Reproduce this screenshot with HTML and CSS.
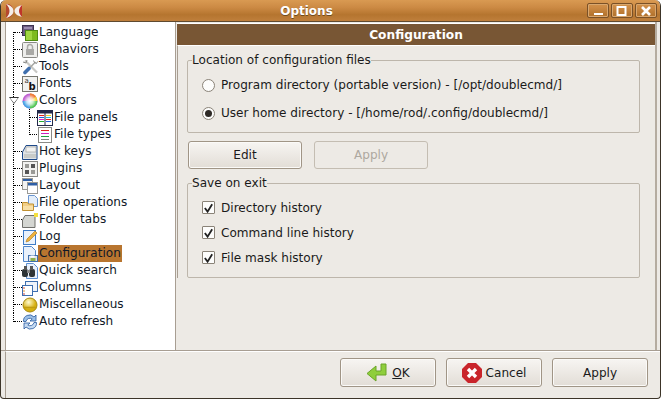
FILE: index.html
```html
<!DOCTYPE html>
<html lang="en">
<head>
<meta charset="utf-8">
<title>Options</title>
<link rel="stylesheet" href="styles.css">
</head>
<body>
<svg class="defs" width="0" height="0" aria-hidden="true">
  <symbol id="i-lang" viewBox="0 0 16 16"><rect x="0.5" y="0.5" width="11" height="10" fill="#6b5a80" stroke="#3d3350"/><rect x="2" y="2" width="8" height="2" fill="#9c8db0"/><rect x="3.5" y="5.5" width="12" height="10" fill="#7dbb1e" stroke="#4f8a10"/><rect x="4" y="6" width="6" height="9" fill="#a0d640"/></symbol>
  <symbol id="i-beh" viewBox="0 0 16 16"><rect x="0.5" y="0.5" width="15" height="15" rx="1" fill="#eeeeec" stroke="#8a8a86"/><rect x="4" y="7" width="8" height="6" fill="#a9a9a6"/><path d="M5.5 7V5a2.5 2.5 0 0 1 5 0v2" fill="none" stroke="#a9a9a6" stroke-width="1.5"/></symbol>
  <symbol id="i-tools" viewBox="0 0 16 16"><path d="M3 1.500l12 12" stroke="#b8b8b4" stroke-width="2"/><path d="M3 1.500l12 12" stroke="#e6e6e4" stroke-width="0.700"/><path d="M13.500 3L8 8.500" stroke="#a8a8a4" stroke-width="1.600"/><path d="M11.500 1.500l1 2 2 1 1-2" fill="none" stroke="#8a8a86"/><path d="M1 3l3 1 1-3" fill="none" stroke="#8a8a86"/><path d="M7 9.500l-4 4" stroke="#3f6fae" stroke-width="3.600" stroke-linecap="round"/></symbol>
  <symbol id="i-colors" viewBox="0 0 16 16"><defs><radialGradient id="wh"><stop offset="0" stop-color="#fff"/><stop offset="0.5" stop-color="#fff" stop-opacity="0.7"/><stop offset="1" stop-color="#fff" stop-opacity="0"/></radialGradient></defs><circle cx="8" cy="8" r="7.5" fill="#c060d0"/><path d="M8 8V0.5A7.5 7.5 0 0 1 15.5 8z" fill="#f4d23a"/><path d="M8 8h7.5A7.5 7.5 0 0 1 8 15.5z" fill="#54c957"/><path d="M8 8v7.5A7.5 7.500 0 0 1 .5 8z" fill="#4aa5e6"/><path d="M8 8L8 .5A7.500 7.500 0 0 1 14 3.500z" fill="#f07a3a"/><circle cx="8" cy="8" r="6.500" fill="url(#wh)"/></symbol>
  <symbol id="i-panels" viewBox="0 0 16 16"><rect x="0.5" y="0.5" width="15" height="15" fill="#fff" stroke="#232a4a"/><rect x="1" y="1" width="14" height="2.500" fill="#232a4a"/><path d="M8 3v12" stroke="#232a4a"/><path d="M2 5.500h5" stroke="#e02020"/><path d="M2 7.500h5" stroke="#2060e0"/><path d="M2 9.500h5" stroke="#e020c0"/><path d="M2 11.500h5" stroke="#20b030"/><path d="M9 5.500h5" stroke="#e8d020"/><path d="M9 7.500h5" stroke="#20c0e0"/><path d="M9 9.500h5" stroke="#e02020"/><path d="M9 11.500h5" stroke="#2060e0"/></symbol>
  <symbol id="i-types" viewBox="0 0 16 16"><rect x="1.5" y="0.5" width="13" height="15" fill="#fff" stroke="#8a8a86"/><path d="M4 3.500h8" stroke="#e02020"/><path d="M4 6.500h8" stroke="#d020c0"/><path d="M4 9.500h8" stroke="#20a040"/><path d="M4 12.500h8" stroke="#808080"/></symbol>
  <symbol id="i-keys" viewBox="0 0 16 16"><path d="M0.500 15.500V8L4 1.500h11v14z" fill="#dfe3e6" stroke="#1f4a8a"/><rect x="4" y="3" width="10" height="5" fill="#f3f3f1" stroke="#9a9a96" stroke-width="0.600"/><rect x="2" y="10" width="12" height="4" fill="#c9cbc8"/></symbol>
  <symbol id="i-plug" viewBox="0 0 16 16"><rect x="0.500" y="0.500" width="15" height="15" fill="#f2f2f0" stroke="#8a8a86"/><rect x="3" y="3" width="4" height="4" fill="#9a9a96"/><rect x="9" y="3" width="4" height="4" fill="#555"/><rect x="3" y="9" width="4" height="4" fill="#555"/><rect x="9" y="9" width="4" height="4" fill="#9a9a96"/></symbol>
  <symbol id="i-layout" viewBox="0 0 16 16"><rect x="0.500" y="0.500" width="10" height="11" fill="#f4f4f2" stroke="#9a9a96"/><rect x="1" y="1" width="9" height="2" fill="#2f5fa5"/><rect x="5.500" y="4.500" width="10" height="11" fill="#fff" stroke="#9a9a96"/><rect x="6" y="5" width="9" height="2.500" fill="#2f5fa5"/></symbol>
  <symbol id="i-fileop" viewBox="0 0 16 16"><path d="M6.500 0.500h6l3 3v8h-9z" fill="#e4eefa" stroke="#6a95cf"/><path d="M0.500 7.500h5l1 1.500h5v6.500h-11z" fill="#f3d088" stroke="#c09030"/><rect x="1" y="11" width="10" height="4" fill="#f8e0a8"/></symbol>
  <symbol id="i-tabs" viewBox="0 0 16 16"><path d="M0.500 15.500V8L3 3.500h10v12z" fill="#d4d6d2" stroke="#70706c"/><rect x="12" y="1" width="4" height="4" fill="#f4e040"/></symbol>
  <symbol id="i-log" viewBox="0 0 16 16"><rect x="1.500" y="1.500" width="12" height="14" fill="#eaf2fc" stroke="#3e7cc8"/><path d="M4 13l1-3 8-8 2 2-8 8z" fill="#eeb13c" stroke="#a87820" stroke-width="0.600"/></symbol>
  <symbol id="i-conf" viewBox="0 0 16 16"><path d="M1.500 0.500h8l4 4v11h-12z" fill="#e8f0fb" stroke="#4f86cc"/><rect x="6.500" y="9.500" width="9" height="6" fill="#dfe3ea" stroke="#3f6fae"/><rect x="8.500" y="12" width="5" height="3" fill="#8db04e"/><rect x="8.500" y="9.500" width="4" height="2" fill="#fff"/></symbol>
  <symbol id="i-search" viewBox="0 0 16 16"><path d="M4.500 0.500h7l4 4v11h-11z" fill="#e8f0fb" stroke="#5d8fd0"/><rect x="0" y="6" width="6" height="8" rx="2" fill="#2e3436"/><rect x="7" y="6" width="6" height="8" rx="2" fill="#2e3436"/><rect x="2" y="3" width="3" height="4" fill="#555"/><rect x="8" y="3" width="3" height="4" fill="#555"/><rect x="5" y="7" width="3" height="3" fill="#888"/></symbol>
  <symbol id="i-cols" viewBox="0 0 16 16"><rect x="3.500" y="1.500" width="12" height="10" fill="#eef3fa" stroke="#3e6fb0"/><rect x="0.500" y="5.500" width="10" height="10" fill="#fff" stroke="#3e6fb0"/><path d="M1 8h2" stroke="#d05030"/><path d="M1 11h2" stroke="#e09030"/><path d="M1 14h2" stroke="#c04040"/></symbol>
  <symbol id="i-misc" viewBox="0 0 16 16"><defs><radialGradient id="yl" cx="0.400" cy="0.300"><stop offset="0" stop-color="#fffbd0"/><stop offset="1" stop-color="#d6b010"/></radialGradient></defs><circle cx="8" cy="8" r="7" fill="url(#yl)" stroke="#a88a10"/><path d="M1.500 10.500h13" stroke="#c09c10" stroke-width="1.500"/></symbol>
  <symbol id="i-refresh" viewBox="0 0 16 16"><path d="M1.500 7.500A6 6 0 0 1 12 3l2-2v6H8l2.200-2A4 4 0 0 0 4 7.500z" fill="#9dc0e8" stroke="#27599e" stroke-width="0.800"/><path d="M14.500 8.500A6 6 0 0 1 4 13l-2 2V9h6l-2.200 2A4 4 0 0 0 12 8.500z" fill="#c5daf2" stroke="#27599e" stroke-width="0.800"/></symbol>
</svg>

<div class="window">
  <header class="titlebar">
    <svg class="app-logo" viewBox="0 0 16 14" width="16" height="14" aria-hidden="true">
      <path d="M0 0h3c3 2 4.500 4.500 4.500 7S6 12 3 14H0z" fill="#b5482f"/>
      <path d="M16 1c-3 1-7 3-7 6s4 5 7 6z" fill="#c0352a"/>
      <path d="M0 0c5 1.500 7.500 4 7.500 7S5 12.500 0 14c2.500-2.500 3.500-4.500 3.500-7S2.500 2.500 0 0z" fill="#f4efe9"/>
      <path d="M16 1c-4 1-7.500 3-7.500 6s3.500 5 7.500 6c-2-2-3-4-3-6s1-4 3-6z" fill="#f4efe9"/>
    </svg>
    <span class="title">Options</span>
    <div class="win-buttons">
      <span class="win-btn"><svg viewBox="0 0 20 14" width="20" height="14"><rect x="6" y="9" width="9" height="2" fill="#fff"/></svg></span>
      <span class="win-btn"><svg viewBox="0 0 20 14" width="20" height="14"><rect x="5.500" y="3" width="8" height="8" fill="none" stroke="#fff" stroke-width="2"/></svg></span>
      <span class="win-btn"><svg viewBox="0 0 20 14" width="20" height="14"><path d="M6 3l8 8M14 3l-8 8" stroke="#fff" stroke-width="2.600"/></svg></span>
    </div>
  </header>

  <div class="main">
    <nav class="tree">
      <div class="row first"><span class="conn"></span><svg class="ic"><use href="#i-lang"/></svg><span class="lbl">Language</span></div>
      <div class="row"><span class="conn"></span><svg class="ic"><use href="#i-beh"/></svg><span class="lbl">Behaviors</span></div>
      <div class="row"><span class="conn"></span><svg class="ic"><use href="#i-tools"/></svg><span class="lbl">Tools</span></div>
      <div class="row"><span class="conn"></span><svg class="ic" viewBox="0 0 16 16"><rect x="0.5" y="0.5" width="15" height="15" fill="#f2f2f0" stroke="#77776f"/><text x="2.500" y="7" class="ic-a">a</text><text x="6.500" y="14" class="ic-b">b</text></svg><span class="lbl">Fonts</span></div>
      <div class="row"><span class="conn conn-open"><span class="arrow"></span></span><svg class="ic"><use href="#i-colors"/></svg><span class="lbl">Colors</span></div>
      <div class="row"><span class="trunk"></span><span class="conn conn-sub"></span><svg class="ic"><use href="#i-panels"/></svg><span class="lbl">File panels</span></div>
      <div class="row"><span class="trunk"></span><span class="conn conn-sub conn-end"></span><svg class="ic"><use href="#i-types"/></svg><span class="lbl">File types</span></div>
      <div class="row"><span class="conn"></span><svg class="ic"><use href="#i-keys"/></svg><span class="lbl">Hot keys</span></div>
      <div class="row"><span class="conn"></span><svg class="ic"><use href="#i-plug"/></svg><span class="lbl">Plugins</span></div>
      <div class="row"><span class="conn"></span><svg class="ic"><use href="#i-layout"/></svg><span class="lbl">Layout</span></div>
      <div class="row"><span class="conn"></span><svg class="ic"><use href="#i-fileop"/></svg><span class="lbl">File operations</span></div>
      <div class="row"><span class="conn"></span><svg class="ic"><use href="#i-tabs"/></svg><span class="lbl">Folder tabs</span></div>
      <div class="row"><span class="conn"></span><svg class="ic"><use href="#i-log"/></svg><span class="lbl">Log</span></div>
      <div class="row selected"><span class="conn"></span><svg class="ic"><use href="#i-conf"/></svg><span class="lbl">Configuration</span></div>
      <div class="row"><span class="conn"></span><svg class="ic"><use href="#i-search"/></svg><span class="lbl">Quick search</span></div>
      <div class="row"><span class="conn"></span><svg class="ic"><use href="#i-cols"/></svg><span class="lbl">Columns</span></div>
      <div class="row"><span class="conn"></span><svg class="ic"><use href="#i-misc"/></svg><span class="lbl">Miscellaneous</span></div>
      <div class="row last"><span class="conn conn-end"></span><svg class="ic"><use href="#i-refresh"/></svg><span class="lbl">Auto refresh</span></div>
    </nav>

    <section class="pane">
      <h1 class="pane-head">Configuration</h1>
      <div class="pane-body">
        <fieldset class="group group-loc">
          <legend>Location of configuration files</legend>
          <label class="opt"><span class="radio"></span>Program directory (portable version) - [/opt/doublecmd/]</label>
          <label class="opt"><span class="radio radio-on"></span>User home directory - [/home/rod/.config/doublecmd/]</label>
        </fieldset>
        <div class="actions">
          <button class="btn btn-act">Edit</button>
          <button class="btn btn-act" disabled>Apply</button>
        </div>
        <fieldset class="group group-save">
          <legend>Save on exit</legend>
          <label class="chk"><span class="box"><svg viewBox="0 0 12 12" width="12" height="12"><path d="M2 6l3 4 5-8" fill="none" stroke="#222" stroke-width="2"/></svg></span>Directory history</label>
          <label class="chk"><span class="box"><svg viewBox="0 0 12 12" width="12" height="12"><path d="M2 6l3 4 5-8" fill="none" stroke="#222" stroke-width="2"/></svg></span>Command line history</label>
          <label class="chk"><span class="box"><svg viewBox="0 0 12 12" width="12" height="12"><path d="M2 6l3 4 5-8" fill="none" stroke="#222" stroke-width="2"/></svg></span>File mask history</label>
        </fieldset>
      </div>
    </section>
  </div>

  <footer class="footer">
    <button class="btn btn-foot">
      <svg viewBox="0 0 22 20" width="22" height="20"><path d="M20 1v11H10v6L1 10.500 10 3v5h5V1z" fill="#8fce3c" stroke="#6aa428"/></svg>
      <span><u>O</u>K</span>
    </button>
    <button class="btn btn-foot">
      <svg viewBox="0 0 20 20" width="20" height="20"><path d="M6 0h8l6 6v8l-6 6H6l-6-6V6z" fill="#c9252b"/><path d="M6 6l8 8M14 6l-8 8" stroke="#fff" stroke-width="3.400"/></svg>
      <span>Cancel</span>
    </button>
    <button class="btn btn-foot"><span>Apply</span></button>
  </footer>
</div>
</body>
</html>
```
FILE: styles.css
```css
* { box-sizing: border-box; }
html, body { margin: 0; padding: 0; }
body {
  width: 662px;
  height: 400px;
  overflow: hidden;
  background: #fff;
  font-family: "DejaVu Sans", sans-serif;
  font-size: 12.07px;
  color: #1a1a1a;
}
.defs { position: absolute; }
.ic-a { font: 7px "DejaVu Sans", sans-serif; fill: #333; }
.ic-b { font: bold 10px "DejaVu Sans", sans-serif; fill: #111; }

.window {
  width: 661px;
  height: 399px;
  display: flex;
  flex-direction: column;
  background: #edeae5;
  border: 1px solid #3c3428;
  border-width: 0 1px 1px 1px;
  border-radius: 6px 6px 4px 4px;
  overflow: hidden;
}
.titlebar {
  height: 22px;
  flex: none;
  display: flex;
  align-items: center;
  padding: 0 3px 0 5px;
  background: linear-gradient(#d99a52 0, #cc8a44 35%, #b5752f 70%, #bf7f3c 100%);
  border-bottom: 1px solid #5f4a30;
}
.app-logo { flex: none; }
.title {
  flex: 1;
  margin-left: 4px;
  text-align: center;
  color: #fff;
  font-weight: bold;
  font-size: 12px;
  text-shadow: 0 1px 0 #6e4a20;
}
.win-buttons { display: flex; gap: 2px; }
.win-btn {
  width: 22px;
  height: 15px;
  display: flex;
  align-items: center;
  justify-content: center;
  border: 1px solid #7a5127;
  border-radius: 2px;
  box-shadow: inset 0 0 0 1px #d9a76e;
}

.main {
  height: 329px;
  flex: none;
  display: flex;
  padding-left: 4px;
  border-bottom: 1px solid #a89e92;
}
.tree {
  width: 171px;
  flex: none;
  padding: 2px 0 0;
  background: #fff;
  border: 1px solid #a89e92;
  border-width: 0 1px 0 1px;
}
.row {
  height: 17px;
  display: flex;
  align-items: center;
  color: #101828;
}
.trunk {
  width: 16px;
  height: 17px;
  flex: none;
  margin-left: 7px;
  border-left: 1px dotted #000;
}
.conn {
  width: 9px;
  height: 17px;
  flex: none;
  margin-left: 7px;
  position: relative;
  border-left: 1px dotted #000;
}
.conn::after {
  content: "";
  position: absolute;
  left: 0;
  top: 8px;
  width: 8px;
  border-top: 1px dotted #000;
}
.row.first .conn { height: 9px; align-self: flex-end; }
.row.first .conn::after { top: 0; }
.conn-end { height: 9px; align-self: flex-start; }
.conn-sub { margin-left: 0; width: 8px; }
.conn-sub::after { width: 7px; }
.conn-open::after { display: none; }
.arrow {
  position: absolute;
  left: -5px;
  top: 5px;
  width: 10px;
  height: 7px;
  background: #333;
  clip-path: polygon(0 0, 100% 0, 50% 100%);
}
.arrow::after {
  content: "";
  position: absolute;
  left: 1px;
  top: 1px;
  width: 8px;
  height: 5px;
  background: #fff;
  clip-path: polygon(0 0, 100% 0, 50% 100%);
}
.ic { width: 16px; height: 16px; flex: none; }
.lbl { padding: 0 1px; line-height: 17px; white-space: nowrap; }
.selected .lbl { background: #b8752f; }

.pane {
  flex: 1;
  min-width: 0;
  margin: 0 3px 0 1px;
  display: flex;
  flex-direction: column;
  border-right: 2px solid #b5aca0;
}
.pane-head {
  margin: 1px 0 0;
  height: 22px;
  flex: none;
  border-top: 1px solid #fff;
  background: #785634;
  color: #fff;
  font-size: 12.2px;
  font-weight: bold;
  line-height: 23px;
  text-align: center;
}
.pane-body {
  padding: 7px 15px 0 9px;
  border-top: 1px solid #fff;
  border-left: 1px solid #a89e92;
}
.group {
  margin: 0;
  padding: 0 0 0 14px;
  border: 1px solid #bdb6ab;
  border-radius: 2px;
  min-width: 0;
}
.group legend {
  padding: 0;
  margin-left: -10px;
  line-height: 15px;
  white-space: nowrap;
}
.group-loc { height: 80px; padding-top: 3px; }
.group-save { height: 102px; padding-top: 4px; }
.opt, .chk { display: flex; align-items: center; gap: 6px; }
.opt { height: 28px; }
.chk { height: 25px; }
.radio, .box {
  width: 13px;
  height: 13px;
  flex: none;
  border: 1px solid #8a8378;
  background: #fdfdfc;
  display: flex;
  align-items: center;
  justify-content: center;
}
.radio { border-radius: 50%; }
.box { border-radius: 1px; }
.radio-on::after {
  content: "";
  width: 7px;
  height: 7px;
  border-radius: 50%;
  background: #2e2a26;
}
.actions { display: flex; gap: 12px; padding: 8px 0 7px 1px; }
.btn {
  font: inherit;
  color: #1a1a1a;
  display: flex;
  align-items: center;
  justify-content: center;
  gap: 4px;
  padding: 0;
  background: linear-gradient(#f7f5f2, #e2ddd6);
  border: 1px solid #a09586;
  border-radius: 3px;
  box-shadow: inset 0 0 0 1px #fbfaf8;
}
.btn:disabled {
  color: #aea89f;
  background: #edeae5;
  border-color: #c4bdb2;
  box-shadow: none;
}
.btn-act { width: 114px; height: 28px; }

.footer {
  flex: 1;
  display: flex;
  justify-content: flex-end;
  gap: 10px;
  padding: 6px 12px 0 0;
  margin-left: 4px;
  border-left: 1px solid #a89e92;
  border-top: 1px solid #fff;
}
.btn-foot { width: 96px; height: 29px; }
```
